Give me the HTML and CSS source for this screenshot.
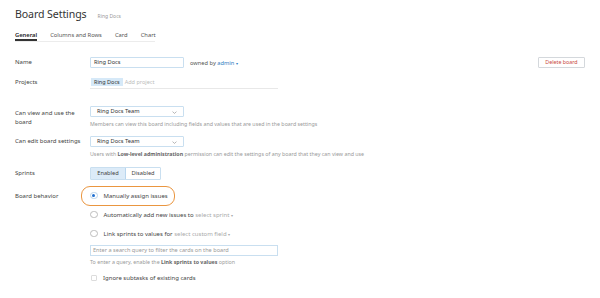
FILE: index.html
```html
<!DOCTYPE html>
<html>
<head>
<meta charset="utf-8">
<link rel="stylesheet" href="styles.css">
</head>
<body>
<div class="page">
  <div class="header">
    <span class="title">Board Settings</span>
    <span class="subtitle">Ring Docs</span>
  </div>
  <div class="tabs">
    <span class="tab active">General</span>
    <span class="tab">Columns and Rows</span>
    <span class="tab">Card</span>
    <span class="tab">Chart</span>
  </div>

  <div class="row r-name">
    <div class="label">Name</div>
    <div class="content inline">
      <div class="input">Ring Docs</div>
      <span class="owned">owned by <span class="link">admin</span> <span class="caret">&#9662;</span></span>
      <div class="spacer"></div>
      <div class="btn-danger">Delete board</div>
    </div>
  </div>

  <div class="row r-projects">
    <div class="label">Projects</div>
    <div class="content">
      <div class="tagline"><span class="tag">Ring Docs</span><span class="placeholder">Add project</span></div>
    </div>
  </div>

  <div class="row r-view">
    <div class="label two">Can view and use the board</div>
    <div class="content">
      <div class="select">Ring Docs Team <span class="chev"><svg width="5" height="3" viewBox="0 0 5 3"><path d="M0.5 0.6 L2.5 2.4 L4.5 0.6" fill="none" stroke="#8a8a8a" stroke-width="0.6"/></svg></span></div>
      <div class="help">Members can view this board including fields and values that are used in the board settings</div>
    </div>
  </div>

  <div class="row r-edit">
    <div class="label">Can edit board settings</div>
    <div class="content">
      <div class="select">Ring Docs Team <span class="chev"><svg width="5" height="3" viewBox="0 0 5 3"><path d="M0.5 0.6 L2.5 2.4 L4.5 0.6" fill="none" stroke="#8a8a8a" stroke-width="0.6"/></svg></span></div>
      <div class="help">Users with <b>Low-level administration</b> permission can edit the settings of any board that they can view and use</div>
    </div>
  </div>

  <div class="row r-sprints">
    <div class="label">Sprints</div>
    <div class="content">
      <div class="seg"><span class="seg-item on">Enabled</span><span class="seg-item">Disabled</span></div>
    </div>
  </div>

  <div class="row r-behavior">
    <div class="label">Board behavior</div>
    <div class="content">
      <div class="option highlighted"><span class="radio checked"></span><span>Manually assign issues</span></div>
      <div class="option"><span class="radio"></span><span>Automatically add new issues to <span class="muted">select sprint</span> <span class="caret-g">&#9662;</span></span></div>
      <div class="option"><span class="radio"></span><span>Link sprints to values for <span class="muted">select custom field</span> <span class="caret-g">&#9662;</span></span></div>
      <div class="query">Enter a search query to filter the cards on the board</div>
      <div class="help h2">To enter a query, enable the <b>Link sprints to values</b> option</div>
      <div class="check"><span class="box"></span><span>Ignore subtasks of existing cards</span></div>
    </div>
  </div>
</div>
</body>
</html>
```

FILE: styles.css
```css
* { box-sizing: border-box; }
html, body { margin: 0; padding: 0; background: #fff; }
body {
  font-family: "Noto Sans", "Open Sans", sans-serif;
  color: #3a3a3a;
  font-size: 6px;
}
.page { padding: 7px 15px 0 15px; width: 600px; }

.header { height: 14px; line-height: 14px; display: flex; align-items: baseline; }
.title { font-size: 10.6px; color: #333; letter-spacing: -0.1px; }
.subtitle { font-size: 5px; color: #999; margin-left: 11px; }

.tabs {
  margin-top: 9px;
  width: 140px;
  display: flex;
  border-bottom: 1px solid #ececec;
  height: 12px;
  white-space: nowrap;
}
.tab { font-size: 5.8px; color: #555; margin-right: 13px; line-height: 10px; flex: none; }
.tab.active { font-weight: 600; color: #222; border-bottom: 2px solid #333; }

.row { display: flex; }
.label { width: 75px; flex: none; font-size: 6px; color: #444; }
.content { flex: 1; }
.inline { display: flex; align-items: center; }
.spacer { flex: 1; }

.r-name { margin-top: 15px; height: 11px; }
.r-name .label { line-height: 11px; }
.input {
  width: 94px; height: 11px; border: 1px solid #c9dff0; border-radius: 1px;
  font-size: 5.7px; line-height: 9px; padding-left: 3px; color: #333;
}
.owned { margin-left: 6px; font-size: 5.7px; color: #555; }
.link { color: #2f7cc0; }
.caret { color: #2f7cc0; font-size: 4px; }
.btn-danger {
  width: 47px; height: 11px; border: 1px solid #d4d8dc; border-radius: 1px;
  color: #c94840; font-size: 5.3px; line-height: 9px; text-align: center;
}

.r-projects { margin-top: 9px; height: 12px; }
.r-projects .label { line-height: 11px; }
.tagline { width: 188px; height: 12px; border-bottom: 1px solid #e8e8e8; display: flex; align-items: flex-start; }
.tag { background: #d6e9f8; font-size: 5.5px; line-height: 8px; padding: 0 3px; color: #333; margin-left: 1px; margin-top: 1px; }
.placeholder { color: #bbb; font-size: 5.5px; line-height: 10px; margin-left: 2px; }

.r-view { margin-top: 17px; }
.label.two { line-height: 8.5px; width: 65px; margin-right: 10px; padding-top: 3px; }
.select {
  width: 94px; height: 11px; border: 1px solid #c9dff0; border-radius: 1px;
  font-size: 5.7px; line-height: 9px; padding-left: 6px; color: #333; position: relative;
}
.chev { position: absolute; right: 6px; top: 1px; }
.help { font-size: 5.3px; color: #999; line-height: 8px; margin-top: 3px; white-space: nowrap; }
.help b { color: #666; font-weight: 700; }

.r-edit { margin-top: 8px; }
.r-edit .label { line-height: 11px; }

.r-sprints { margin-top: 9px; }
.r-sprints .label { line-height: 13px; }
.seg { display: flex; width: 71px; height: 13px; border: 1px solid #c9dff0; border-radius: 1px; }
.seg-item { flex: 1; text-align: center; font-size: 5.7px; line-height: 11px; color: #444; }
.seg-item.on { background: #dcebf8; border-right: 1px solid #b9d6ee; }

.r-behavior { margin-top: 6px; }
.r-behavior .label { padding-top: 6px; line-height: 8px; }
.content { position: relative; }
.option { display: flex; align-items: center; height: 19px; font-size: 6px; color: #444; }
.option.highlighted { position: relative; }
.option.highlighted::before {
  content: ""; position: absolute; left: -9px; top: 0; width: 92px; height: 18px;
  border: 1.3px solid #ea9640; border-radius: 9px;
}
.radio {
  width: 7.5px; height: 7.5px; border: 1px solid #bcbcbc; border-radius: 50%;
  margin-right: 6px; flex: none; position: relative;
}
.radio.checked { border-color: #b9d3ea; }
.radio.checked::after {
  content: ""; position: absolute; left: 1.3px; top: 1.3px; width: 3px; height: 3px;
  border-radius: 50%; background: #1f6fd0;
}
.muted { color: #aaa; }
.caret-g { color: #aaa; font-size: 3.5px; }
.query {
  margin-top: 2px; width: 188px; height: 11px; border: 1px solid #c9dff0;
  font-size: 5.6px; line-height: 9px; color: #999; padding-left: 2px;
}
.help.h2 { margin-top: 2px; }
.check { display: flex; align-items: center; margin-top: 7px; font-size: 6px; color: #444; height: 10px; }
.box { width: 6px; height: 6px; border: 1px solid #dcdcdc; border-radius: 1px; margin-left: 1px; margin-right: 6px; }
```
